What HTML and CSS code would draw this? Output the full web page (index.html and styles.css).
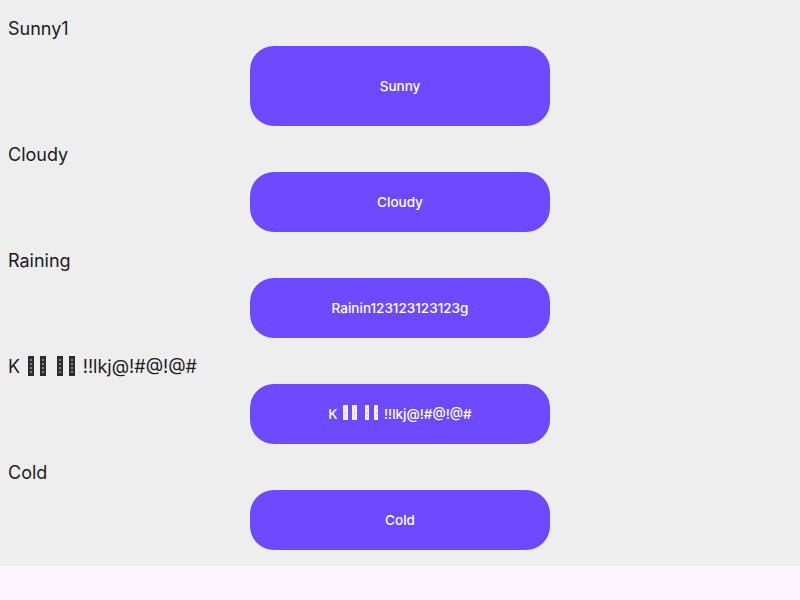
FILE: index.html
```html
<!DOCTYPE html>
<html>
<head>
<meta charset="utf-8">
<link rel="stylesheet" href="styles.css">
</head>
<body>
<div class="list">
  <div class="item">
    <div class="label">Sunny1</div>
    <button class="btn btn-tall">Sunny</button>
  </div>
  <div class="item">
    <div class="label">Cloudy</div>
    <button class="btn">Cloudy</button>
  </div>
  <div class="item">
    <div class="label">Raining</div>
    <button class="btn">Rainin123123123123g</button>
  </div>
  <div class="item">
    <div class="label">K <span class="tofu"></span><span class="tofu"></span> <span class="tofu"></span><span class="tofu"></span> !!lkj@!#@!@#</div>
    <button class="btn">K <span class="tofu"></span><span class="tofu"></span> <span class="tofu"></span><span class="tofu"></span> !!lkj@!#@!@#</button>
  </div>
  <div class="item">
    <div class="label">Cold</div>
    <button class="btn">Cold</button>
  </div>
</div>
</body>
</html>
```
FILE: styles.css
```css
html, body {
  margin: 0;
  padding: 0;
  background: #fcf5ff;
  font-family: Inter, "Noto Sans", sans-serif;
}
.list {
  background: #eeeeee;
  display: flex;
  flex-direction: column;
  padding-bottom: 16px;
}
.item {
  display: flex;
  flex-direction: column;
  align-items: center;
}
.label {
  align-self: stretch;
  padding: 17px 8px 5px;
  font-size: 18px;
  line-height: 24px;
  color: #1c1b1f;
}
.btn {
  width: 300px;
  height: 60px;
  border: none;
  border-radius: 24px;
  background: #6d4aff;
  color: #ffffff;
  font-family: Inter, "Noto Sans", sans-serif;
  font-size: 13.5px;
  font-weight: 500;
  line-height: 16px;
  padding: 0 0 1px;
}
.btn-tall {
  height: 80px;
}
.tofu {
  display: inline-block;
  box-sizing: border-box;
  width: 0.34em;
  height: 1.1em;
  margin: 0 0.16em;
  padding: 3px 2px;
  vertical-align: -0.17em;
  background:
    repeating-linear-gradient(to bottom, rgba(255, 255, 255, 0.4) 0 2px, transparent 2px 4px) content-box,
    #2c2c2c;
}
.btn .tofu {
  vertical-align: -0.1em;
  background:
    repeating-linear-gradient(to bottom, rgba(110, 75, 255, 0.3) 0 2px, transparent 2px 4px) content-box,
    #f3f0ff;
}
```
